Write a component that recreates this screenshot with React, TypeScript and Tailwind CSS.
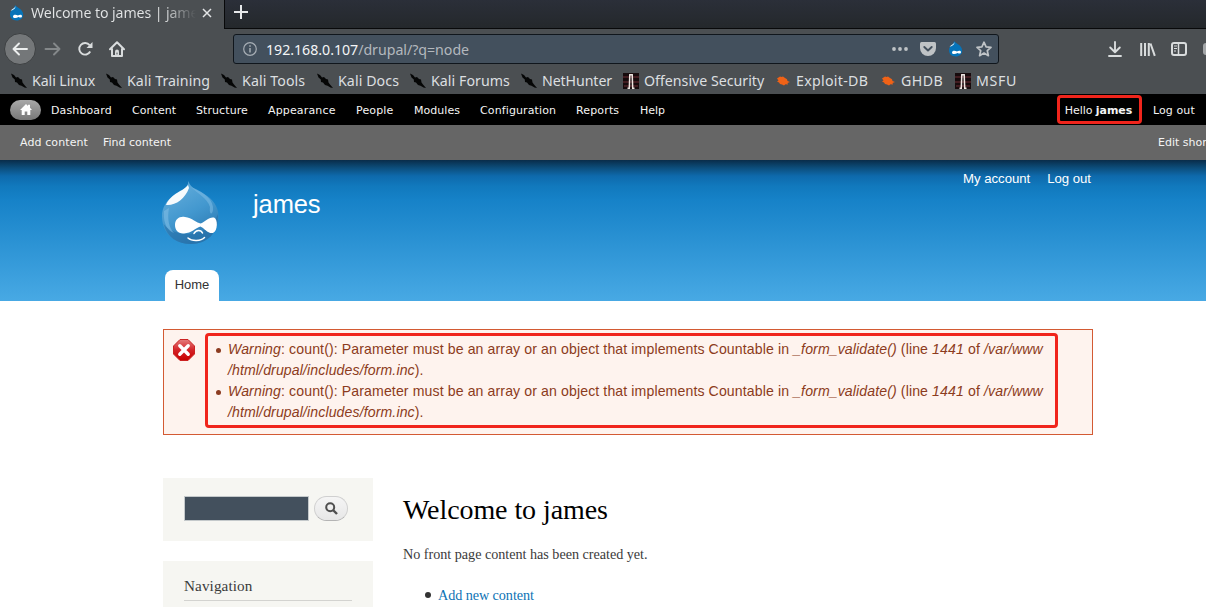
import type { ReactNode } from "react";

const UI = "font-['Noto_Sans',sans-serif]";

function DrupalMini() {
  return (
    <svg width="15" height="16" viewBox="0 0 15 16" className="shrink-0">
      <path d="M6 0C7 2 14 4 14.2 9.500C14.300 13 11.500 15.500 7.700 15.500C3.500 15.500 1 13 1 9.300C1 4.500 6 3.500 6 0Z" fill="#0673b8" />
      <path d="M1.500 6C3 4 6 3 6.500 1.300C6.500 4 4 5 1.500 6Z" fill="#eaf5fb" />
      <path d="M4 11.500C4 9.300 7 9.200 9 10.500C10.500 9.600 13 9.500 13 11.300C13 13 11 12.800 9.500 11.900C7.500 13.500 4 13.500 4 11.500Z" fill="#fff" />
    </svg>
  );
}

function KaliIcon() {
  return (
    <svg width="16" height="16" viewBox="0 0 16 16" className="shrink-0">
      <path d="M0 0.500L3 2L5 4.500L7 4L9 6L11 6.500L11.500 9.500L13 11.500L16 15L13.500 14.500L10.500 12.800L8 12L6 9.500L4 9L3.800 6.500L1.500 4.500Z" fill="#050606" />
    </svg>
  );
}

function OffsecIcon() {
  return (
    <svg width="16" height="16" viewBox="0 0 16 16" className="shrink-0">
      <rect width="16" height="16" fill="#170b0d" />
      <path d="M0 4H16M0 9H16M1 13H15" stroke="#512328" strokeWidth="1.500" />
      <path d="M4.500 15.300H6.300L6.800 1.800H9.200L9.700 15.300H11.500" fill="none" stroke="#eee5e1" strokeWidth="1.500" />
    </svg>
  );
}

function BugIcon() {
  return (
    <svg width="16" height="16" viewBox="0 0 16 16" className="shrink-0">
      <path d="M2 5.500L3.500 4.500L5 3.500L6.500 4L8 3.500L10 5L12 6.300L12.500 8L15 9L12.500 10L13 11.500L10.500 11.300L9 12.500L7 11.500L5 11L4 9.500L2 8.500L3.500 7.500Z" fill="#ef6217" />
    </svg>
  );
}

const bookmarks: { label: string; icon: ReactNode; w: string }[] = [
  { label: "Kali Linux", icon: <KaliIcon />, w: "w-[95px] tracking-[-0.08px]" },
  { label: "Kali Training", icon: <KaliIcon />, w: "w-[115px] tracking-[0.08px]" },
  { label: "Kali Tools", icon: <KaliIcon />, w: "w-[96px] tracking-[0.1px]" },
  { label: "Kali Docs", icon: <KaliIcon />, w: "w-[93px] tracking-[0.08px]" },
  { label: "Kali Forums", icon: <KaliIcon />, w: "w-[111px] tracking-[0.05px]" },
  { label: "NetHunter", icon: <KaliIcon />, w: "w-[102px] tracking-[-0.1px]" },
  { label: "Offensive Security", icon: <OffsecIcon />, w: "w-[152px]" },
  { label: "Exploit-DB", icon: <BugIcon />, w: "w-[105px] tracking-[0.3px]" },
  { label: "GHDB", icon: <BugIcon />, w: "w-[75px] tracking-[0.4px]" },
  { label: "MSFU", icon: <OffsecIcon />, w: "w-[80px] tracking-[0.7px]" },
];

const adminMenu = [
  { label: "Dashboard", w: "w-[81px] tracking-[0.12px]" },
  { label: "Content", w: "w-[64px] tracking-[0.05px]" },
  { label: "Structure", w: "w-[72px] tracking-[0.08px]" },
  { label: "Appearance", w: "w-[88px] tracking-[0.15px]" },
  { label: "People", w: "w-[58px] tracking-[0.15px]" },
  { label: "Modules", w: "w-[66px] tracking-[0.05px]" },
  { label: "Configuration", w: "w-[96px] tracking-[0.12px]" },
  { label: "Reports", w: "w-[64px] tracking-[0.15px]" },
  { label: "Help", w: "w-[50px]" },
];

function TabStrip() {
  return (
    <div className="flex h-[29px] bg-linear-to-b from-[#2b2f39] to-[#24282b]">
      <div className="flex w-[224px] items-center bg-[#4b4f52] pb-[3px] pl-[9px]">
        <DrupalMini />
        <span className="ml-[7px] w-[165px] overflow-hidden whitespace-nowrap bg-linear-to-r from-[#e3e5e6] from-80% to-transparent bg-clip-text text-[14.2px] leading-5 tracking-[-0.12px] text-transparent">
          Welcome to james | james
        </span>
        <svg width="10" height="10" viewBox="0 0 10 10" className="ml-[6px]">
          <path d="M1 1L9 9M9 1L1 9" stroke="#e3e5e6" strokeWidth="1.500" />
        </svg>
      </div>
      <div className="flex-1 border-b border-l border-[#08090a] pl-[9px] pt-[5px]">
        <svg width="14" height="14" viewBox="0 0 14 14">
          <path d="M7 0V14M0 7H14" stroke="#e6e8ea" strokeWidth="2" />
        </svg>
      </div>
    </div>
  );
}

function NavBar() {
  return (
    <div className="flex h-[40px] items-center pl-1">
      <div className="flex size-8 shrink-0 items-center justify-center rounded-full border border-[#3d4042] bg-[#747779]">
        <svg width="16" height="14" viewBox="0 0 16 14" fill="none" stroke="#eceeee" strokeWidth="1.900" strokeLinecap="round" strokeLinejoin="round">
          <path d="M15 7H1.500M7 1.500L1.500 7L7 12.500" />
        </svg>
      </div>
      <svg width="17" height="14" viewBox="0 0 17 14" className="ml-[8px] shrink-0" fill="none" stroke="#84888a" strokeWidth="1.900" strokeLinecap="round" strokeLinejoin="round">
        <path d="M1.500 7H15.500M10 1.500L15.500 7L10 12.500" />
      </svg>
      <svg width="16" height="16" viewBox="0 0 16 16" className="ml-[16px] shrink-0" fill="none" stroke="#d9dcdd" strokeWidth="1.900">
        <path d="M12.600 4.200A5.800 5.800 0 1 0 13.200 10.500" />
        <path d="M15.500 1V7H9.500Z" fill="#d9dcdd" stroke="none" />
      </svg>
      <svg width="16" height="16" viewBox="0 0 16 16" className="ml-[16px] shrink-0" fill="none" stroke="#d9dcdd" strokeWidth="2" strokeLinecap="round" strokeLinejoin="round">
        <path d="M1 8.300L8 1.300L15 8.300M3 8V15H13V8" />
        <path d="M6 15V10.500A2 2 0 0 1 10 10.500V15Z" fill="#d9dcdd" stroke="none" />
        <path d="M8 12V13" stroke="#4b4f52" strokeWidth="1" />
      </svg>
      <div className="ml-[108px] flex h-[30px] w-[766px] shrink-0 items-center rounded-[3px] border border-[#10161c] bg-[#43505d] pl-[9px]">
        <svg width="14" height="14" viewBox="0 0 14 14" fill="none" stroke="#a7aeb5">
          <circle cx="7" cy="7" r="6.300" strokeWidth="1.200" />
          <path d="M7 6V10.500M7 3.300V4.800" strokeWidth="1.500" />
        </svg>
        <span className="ml-[9px] mt-px flex-1 whitespace-nowrap text-[14.2px] tracking-[-0.03px] text-[#b3b8bd]">
          <span className="text-[#f4f5f6]">192.168.0.107</span>/drupal/?q=node
        </span>
        <svg width="16" height="4" viewBox="0 0 16 4" fill="#bfc3c6">
          <circle cx="2" cy="2" r="1.900" /><circle cx="8" cy="2" r="1.900" /><circle cx="14" cy="2" r="1.900" />
        </svg>
        <svg width="16" height="14" viewBox="0 0 16 14" className="ml-[12px]">
          <path d="M1.500 0H14.500Q16 0 16 1.500V6A8 8 0 0 1 0 6V1.500Q0 0 1.500 0Z" fill="#bfc3c6" />
          <path d="M4.300 5L8 8.500L11.700 5" fill="none" stroke="#43505d" strokeWidth="1.900" strokeLinecap="round" strokeLinejoin="round" />
        </svg>
        <span className="ml-[12px] flex"><DrupalMini /></span>
        <svg width="16" height="16" viewBox="0 0 16 16" className="ml-[13px] mr-[6px]">
          <path d="M8 1.200L10.100 5.800L15 6.300L11.300 9.700L12.400 14.700L8 12.100L3.600 14.700L4.700 9.700L1 6.300L5.900 5.800Z" fill="none" stroke="#bfc3c6" strokeWidth="1.700" strokeLinejoin="round" />
        </svg>
      </div>
      <svg width="14" height="16" viewBox="0 0 14 16" className="ml-[109px] shrink-0" fill="none" stroke="#d9dcdd" strokeWidth="1.900" strokeLinecap="round" strokeLinejoin="round">
        <path d="M7 1V11M2.200 6.500L7 11.200L11.800 6.500M1 15H13" />
      </svg>
      <svg width="16" height="15" viewBox="0 0 16 15" className="ml-[18px] shrink-0" fill="none" stroke="#d9dcdd" strokeWidth="2">
        <path d="M1.200 1V14M5 1V14M8.800 1V14M10.500 1.500L14.800 13.800" />
      </svg>
      <svg width="16" height="14" viewBox="0 0 16 14" className="ml-[15px] shrink-0" fill="none" stroke="#d9dcdd">
        <rect x="1" y="1" width="14" height="12" rx="2" strokeWidth="2" />
        <path d="M7.500 1V13" strokeWidth="1.500" />
        <path d="M3 4H6M3 6.500H6M3 9H5" strokeWidth="1" />
      </svg>
      <div className="ml-[16px] h-3 w-[3px] shrink-0 rounded-l-full bg-[#a3a6a8]" />
    </div>
  );
}

function AdminBars() {
  return (
    <div className="font-['DejaVu_Sans',sans-serif] text-[11px] text-[#f4f4f4]">
      <div className="flex h-[31px] items-center bg-black pl-[10px]">
        <span className="mr-[10px] flex h-5 w-[31px] shrink-0 items-center justify-center rounded-[10px] bg-linear-to-b from-[#a9a9a9] to-[#787878]">
          <svg width="12" height="11" viewBox="0 0 12 11">
            <path d="M6 0L8 2V0.800H10V3.800L12 6H10.300V11H7.300V7.500H4.700V11H1.700V6H0Z" fill="#fff" />
          </svg>
        </span>
        {adminMenu.map((m) => (
          <span key={m.label} className={m.w + " shrink-0 whitespace-nowrap pt-[3px]"}>{m.label}</span>
        ))}
        <span className="ml-[367px] flex h-[29px] w-[85px] shrink-0 items-center justify-center whitespace-pre rounded-[4px] border-[3px] border-[#f0251c] pr-[2px] pt-[3px] tracking-[-0.04px]">
          Hello <b>james</b>
        </span>
        <span className="ml-[11px] whitespace-nowrap pt-[3px] tracking-[0.1px]">Log out</span>
      </div>
      <div className="flex h-[35px] items-center overflow-hidden bg-[#666] pl-5 pt-px">
        <span className="w-[83px] tracking-[0.1px]">Add content</span>
        <span>Find content</span>
        <span className="ml-auto w-12 whitespace-nowrap">Edit shortcuts</span>
      </div>
    </div>
  );
}

function DrupalLogo() {
  return (
    <svg width="60" height="66" viewBox="0 0 60 66">
      <defs>
        <linearGradient id="drop" x1="0" y1="0" x2="0.500" y2="1">
          <stop offset="0" stopColor="#6cb2de" />
          <stop offset="0.600" stopColor="#4398cf" />
          <stop offset="1" stopColor="#2d7cb5" />
        </linearGradient>
      </defs>
      <path d="M27.500 1C29 8 37 10 43 14C52 19 57.500 27 57.500 36C57.500 53 46 64 30 64C13 64 1 53 1 36C1 28 5 21 12 16C19 11 27 9 27.500 1Z" fill="url(#drop)" />
      <path d="M2.500 44C14 58 47 60 57 34C57.500 53 46 64 30 64C16 64 6 57 2.500 44Z" fill="#256ea6" opacity=".55" />
      <path d="M30 7C45 13 53 21 52 30C51 36 48 34 49 27C46 18 37 14 30 7Z" fill="#79b9e2" opacity=".6" />
      <path d="M3 31C2 46 8 51 13 53C8 48 6 39 8 28Z" fill="#7fbde5" opacity=".6" />
      <path d="M27 5C23 11 10 13 5 25C14 26 24 19 28 8Z" fill="#fff" opacity=".95" />
      <path d="M14 45C14 39 18.500 36 24 37C31 38 36 43 39.500 43.500C44 42 48 36.500 53 37.500C57 39 57 51 52 53C47 54 43 48 39.500 46.500C34 48 31 53 23 53.500C17 54 14 50 14 45Z" fill="#fff" />
      <path d="M33 53.500C35 49.500 40 49.500 41.500 53M27 58C31 61.500 40 61.300 43.500 57.500" fill="none" stroke="#fff" strokeWidth="1.500" strokeLinecap="round" />
    </svg>
  );
}

function SiteHeader() {
  return (
    <header className="h-[141px] bg-[linear-gradient(180deg,#092c49_0px,#0c4a76_7px,#0e6aac_16px,#1179bd_26px,#1682c8_40px,#48a9e4_141px)] pl-[161px] pr-[115px] font-['Liberation_Sans',sans-serif] text-white">
      <div className="flex h-[110px] items-start">
        <div className="pt-5"><DrupalLogo /></div>
        <span className="ml-8 mt-[29px] text-[25.5px] leading-[30px] tracking-[-0.1px]">james</span>
        <nav className="ml-auto mt-[9px] flex gap-[17px] text-[13.200px] leading-5 tracking-[-0.03px]">
          <a>My account</a>
          <a>Log out</a>
        </nav>
      </div>
      <div className="ml-1 flex h-[31px] w-[54px] justify-center rounded-t-[8px] bg-white pt-[5px] text-[13px] leading-5 text-[#333]">Home</div>
    </header>
  );
}

function Warning() {
  return (
    <li className="flex">
      <span className="mr-[7px] mt-[9px] size-[5px] shrink-0 rounded-full bg-[#8c3b20]" />
      <span className="whitespace-nowrap tracking-[0.115px]">
        <i>Warning</i>: count(): Parameter must be an array or an object that implements Countable in <i>_form_validate()</i> (line <i>1441</i> of <i>/var/www</i>
        <br />
        <i>/html/drupal/includes/form.inc</i>).
      </span>
    </li>
  );
}

function ErrorBox() {
  return (
    <div className="ml-[163px] mt-[28px] flex h-[106px] w-[930px] shrink-0 border border-[#d35a33] bg-[#fef3ee] pl-[8px] pt-[3px] font-['Liberation_Sans',sans-serif] text-[14.1px] leading-[21px] text-[#8c3b20]">
      <svg width="24" height="24" viewBox="0 0 24 24" className="mr-[9px] mt-[5px] shrink-0">
        <defs>
          <linearGradient id="stop" x1="0" y1="0" x2="0" y2="1">
            <stop offset="0" stopColor="#e47c7c" /><stop offset=".5" stopColor="#d42328" /><stop offset="1" stopColor="#c80000" />
          </linearGradient>
        </defs>
        <path d="M8 1.500H16L22.500 8V16L16 22.500H8L1.500 16V8Z" fill="url(#stop)" stroke="#c22" strokeLinejoin="round" />
        <path d="M7.800 7.800L16.200 16.200M16.200 7.800L7.800 16.200" stroke="#fff" strokeWidth="3.400" strokeLinecap="round" />
      </svg>
      <ul className="h-[95px] w-[853px] rounded-[4px] border-[3px] border-[#f0251c] pl-[8px] pt-[3px]">
        <Warning />
        <Warning />
      </ul>
    </div>
  );
}

function Content() {
  return (
    <div className="flex flex-1 pl-[163px] pt-[43px] font-['Liberation_Serif',serif] text-[#3b3b3b]">
      <aside className="w-[210px]">
        <div className="flex h-[63px] items-start bg-[#f6f6f2] pl-[21px] pt-[18px]">
          <div className="h-[25px] w-[125px] border border-[#c4c9cb] bg-[#43505d]" />
          <div className="ml-[5px] flex h-[25px] w-[34px] items-center justify-center rounded-[13px] border border-[#d0d0d0] border-b-[#b4b4b4] bg-linear-to-b from-[#f5f5f5] to-[#e7e7e7]">
            <svg width="13" height="13" viewBox="0 0 13 13" fill="none" stroke="#4f4f4f" strokeWidth="2">
              <circle cx="5.200" cy="5.200" r="4" /><path d="M8 8L12 12" strokeWidth="2.400" />
            </svg>
          </div>
        </div>
        <div className="mt-[20px] h-[46px] bg-[#f6f6f2] px-[21px] pt-[15px]">
          <h2 className="h-[25px] border-b border-[#d3d3d0] text-[15.2px] leading-5 tracking-[0.1px]">Navigation</h2>
        </div>
      </aside>
      <main className="ml-[30px]">
        <h1 className="mt-[15px] text-[28px] leading-[34px] tracking-[-0.08px] text-black">Welcome to james</h1>
        <p className="mt-[17px] text-[14.2px] leading-5 tracking-[-0.03px]">No front page content has been created yet.</p>
        <div className="mt-[21px] flex items-center text-[14.2px] leading-5 tracking-[-0.07px]">
          <span className="ml-[22px] mr-[7px] size-[6px] rounded-full bg-[#333]" />
          <a className="text-[#0c72b5]">Add new content</a>
        </div>
      </main>
    </div>
  );
}

export default function App() {
  return (
    <div className="flex h-[607px] w-[1206px] flex-col overflow-hidden bg-white">
      <div className={UI + " h-[94px] shrink-0 bg-[#4b4f52]"}>
        <TabStrip />
        <NavBar />
        <div className="flex h-6 items-center pl-[11px] text-[14.2px] text-[#dcdfe0]">
          {bookmarks.map((b) => (
            <span key={b.label} className={b.w + " flex shrink-0 items-center gap-[5px] whitespace-nowrap"}>
              {b.icon}
              {b.label}
            </span>
          ))}
        </div>
      </div>
      <AdminBars />
      <SiteHeader />
      <ErrorBox />
      <Content />
    </div>
  );
}
